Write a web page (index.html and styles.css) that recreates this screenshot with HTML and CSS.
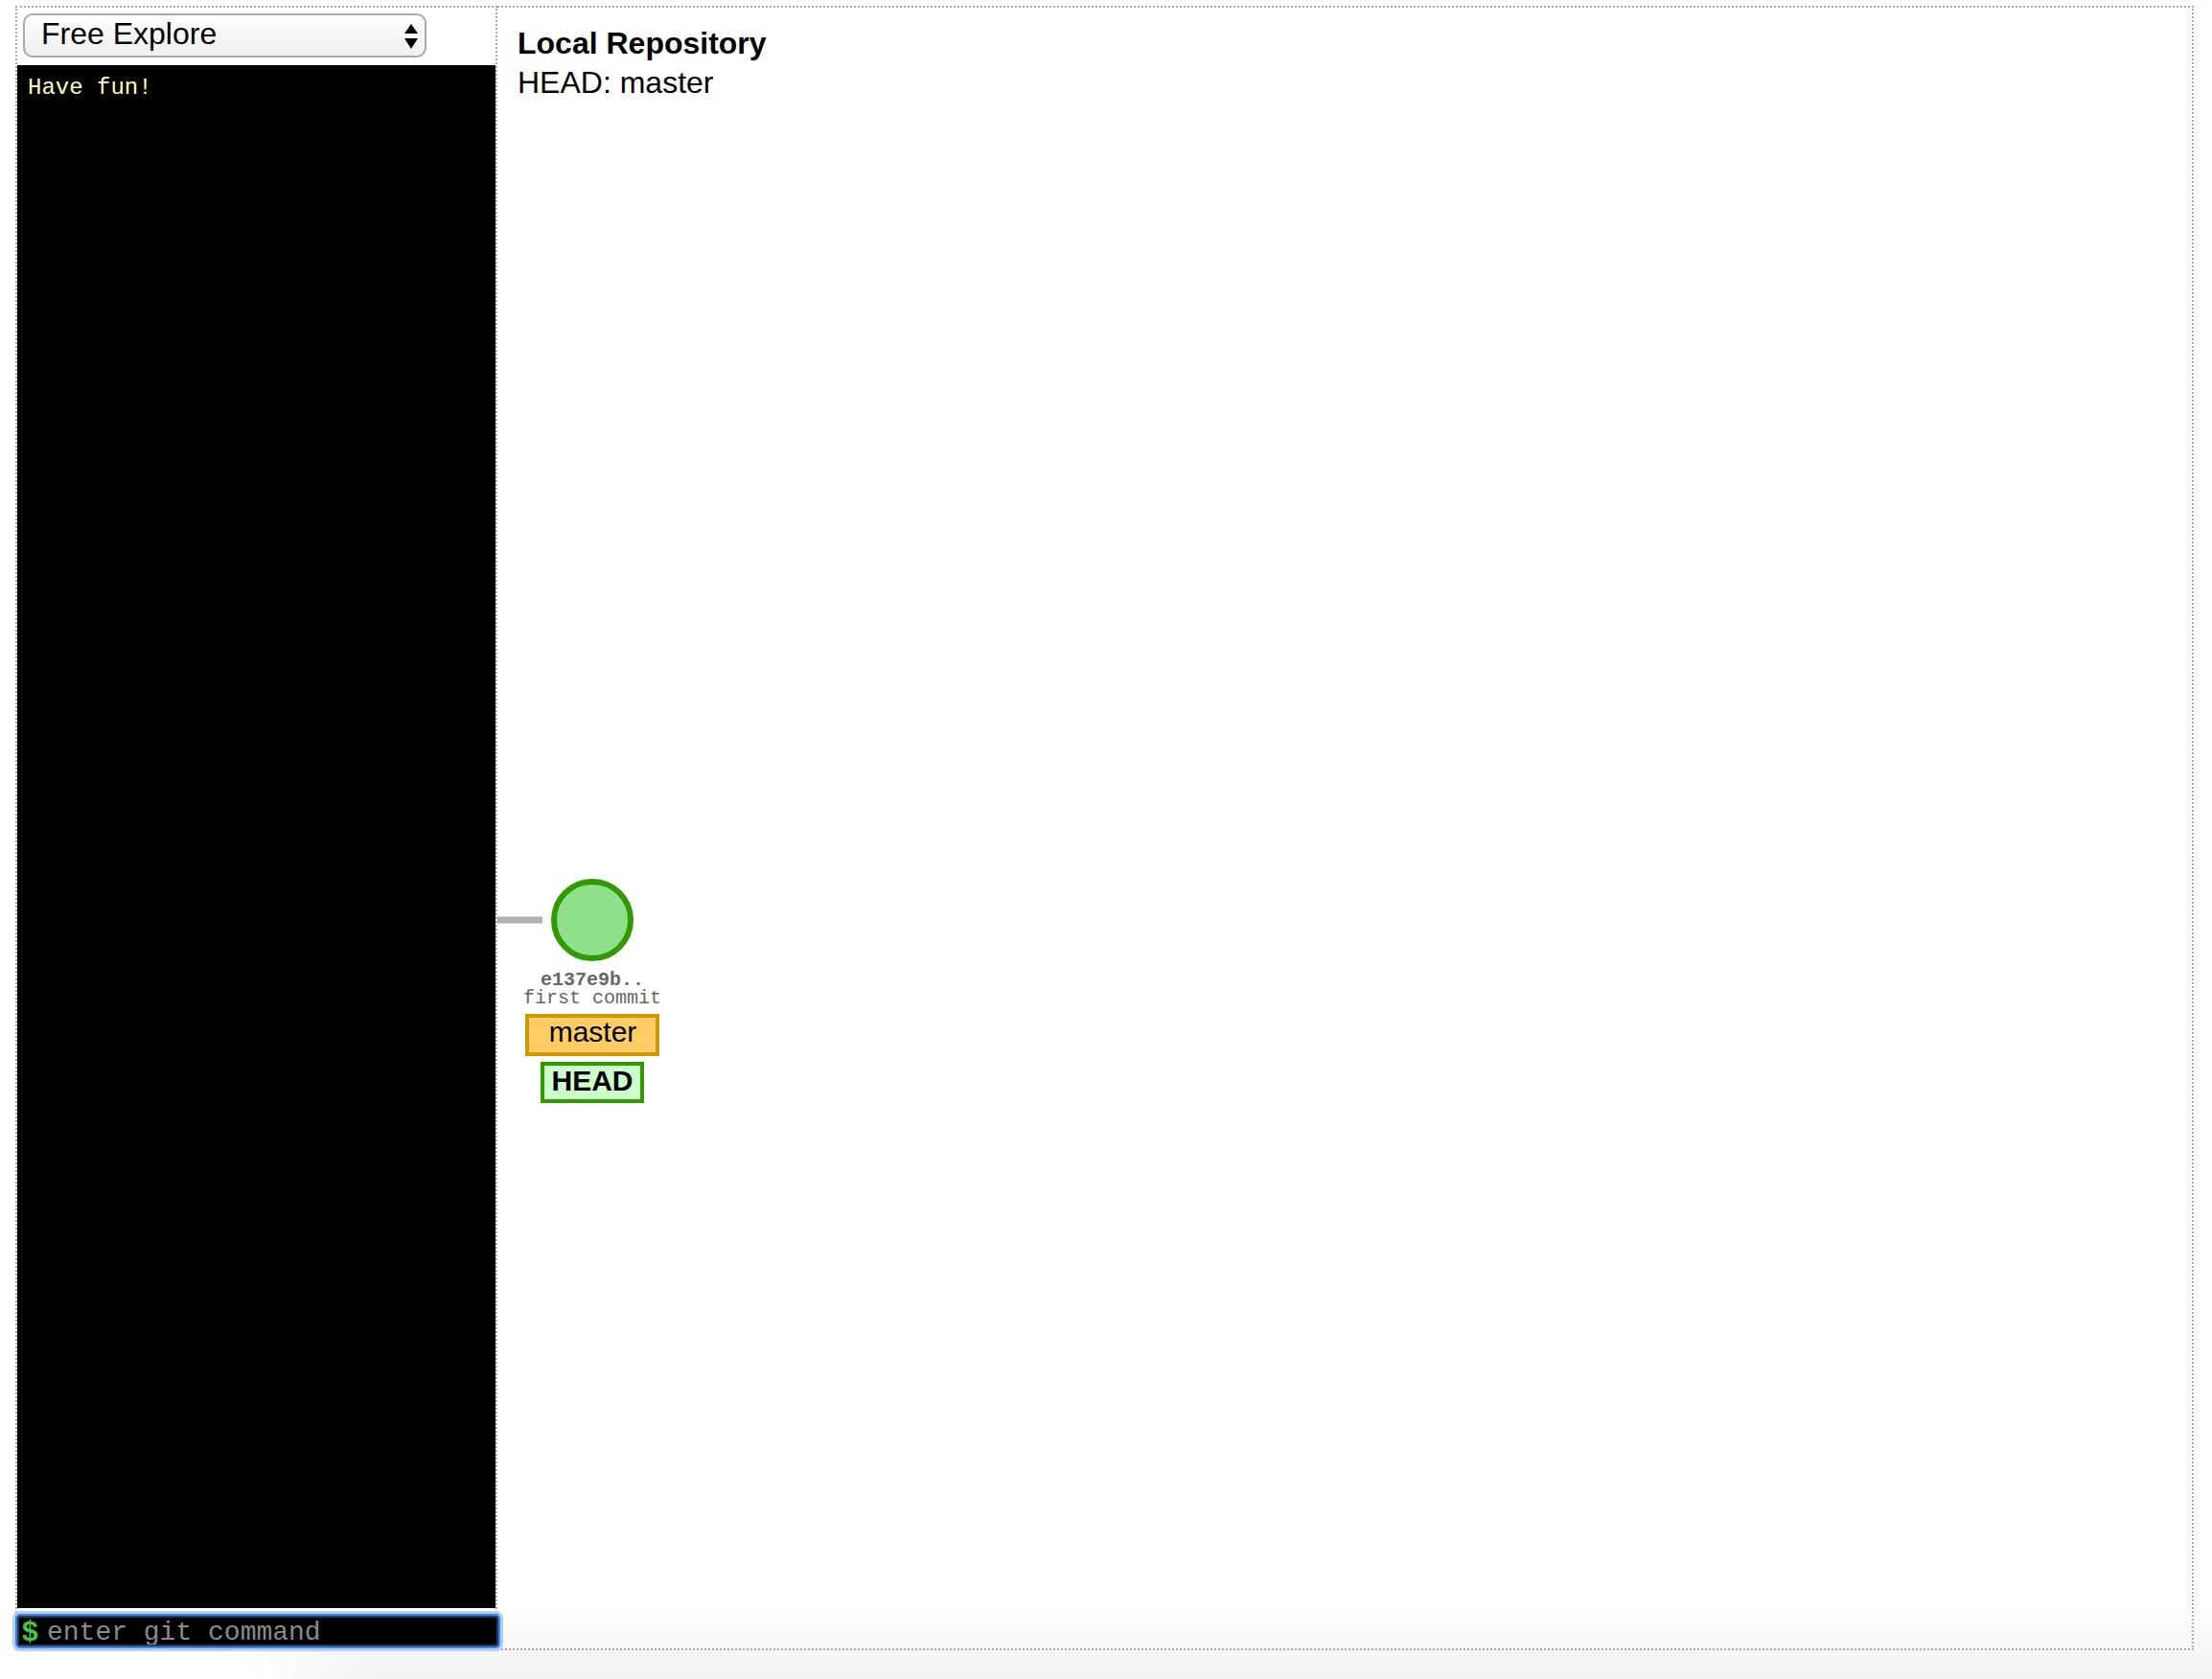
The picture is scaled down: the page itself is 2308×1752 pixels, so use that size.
FILE: index.html
```html
<!DOCTYPE html>
<html lang="en">
<head>
<meta charset="utf-8">
<title>Explain Git - Free Explore</title>
<link rel="stylesheet" href="styles.css">
</head>
<body>
<div class="app">
  <div class="control-box">
    <div class="select" role="combobox" aria-label="Choose example">
      <span class="select-label">Free Explore</span>
      <svg class="select-arrows" width="14" height="28" viewBox="0 0 14 28" aria-hidden="true">
        <polygon points="7,0 14,10 0,10" fill="#000"/>
        <polygon points="0,15 14,15 7,26" fill="#000"/>
      </svg>
    </div>
    <div class="log">
      <div class="info">Have fun!</div>
    </div>
    <div class="prompt">
      <span class="dollar">$</span>
      <input class="cmd" type="text" placeholder="enter git command">
    </div>
  </div>
  <div class="svg-container">
    <div class="repo-title">Local Repository</div>
    <div class="head-info">HEAD: master</div>
    <svg class="graph" width="1768" height="1712" aria-label="commit graph">
      <line class="history-line" x1="0" y1="952" x2="47" y2="952"/>
      <circle class="commit" cx="99" cy="952" r="40"/>
      <text class="commit-id" x="99" y="1020">e137e9b..</text>
      <text class="message" x="99" y="1039">first commit</text>
      <rect class="branch-tag" x="31" y="1052" width="136" height="40"/>
      <text class="branch-label" x="99.5" y="1079">master</text>
      <rect class="head-tag" x="47" y="1102" width="104" height="39"/>
      <text class="head-label" x="99" y="1130">HEAD</text>
    </svg>
  </div>
</div>
</body>
</html>
```

FILE: styles.css
```css
* { box-sizing: border-box; }

html, body {
  margin: 0;
  padding: 0;
}

html {
  overflow: hidden;
}

body {
  height: 1752px;
  font-family: "Liberation Sans", Arial, sans-serif;
  color: #000;
  background:
    radial-gradient(ellipse 400px 90px at 0 100%, #ffffff 65%, rgba(255,255,255,0) 100%),
    linear-gradient(180deg, #ffffff 0, #ffffff 1676px, #fafafa 1704px, #f1f1f1 1752px);
  background-repeat: no-repeat;
}

.app {
  display: flex;
  align-items: flex-start;
  padding: 6px 0 0 16px;
}

/* left control box */
.control-box {
  width: 503px;
  height: 1716px;
  border: 2px dotted #aaa;
  display: flex;
  flex-direction: column;
}

.select {
  margin: 6px 0 0 6px;
  width: 421px;
  height: 46px;
  border: 2px solid #a9a9a9;
  border-radius: 10px;
  background: linear-gradient(180deg, #ffffff 0%, #f6f6f6 50%, #efefef 100%);
  display: flex;
  align-items: flex-start;
  justify-content: space-between;
  padding: 0 7px 4px 17px;
}

.select-label {
  font-size: 32px;
  line-height: 38px;
  color: #000;
}

.select-arrows {
  margin-top: 9px;
  flex: none;
}

.log {
  margin-top: 8px;
  height: 1610px;
  background: #000;
  padding: 10px 11px;
  font-family: "Liberation Mono", "Courier New", monospace;
  font-size: 24px;
}

.info {
  color: #ffffc4;
}

.prompt {
  margin-top: 8px;
  width: 502px;
  height: 32px;
  border: 2px solid #1c3a63;
  border-radius: 3px;
  background: #000;
  box-shadow: 0 0 0 2px #3f82d6, 0 0 0 5px #aecff6;
  display: flex;
  align-items: center;
  position: relative;
  z-index: 1;
}

.dollar {
  width: 29px;
  padding-left: 3px;
  font-family: "Liberation Sans", Arial, sans-serif;
  font-weight: bold;
  font-size: 30px;
  line-height: 28px;
  color: #45c545;
}

.cmd {
  flex: 1;
  min-width: 0;
  height: 28px;
  border: 0;
  outline: none;
  background: transparent;
  padding: 2px 0 0 0;
  font-family: "Liberation Mono", "Courier New", monospace;
  font-size: 28px;
  line-height: 26px;
  color: #fff;
}

.cmd::placeholder {
  color: #8a8a8a;
}

/* right svg area */
.svg-container {
  position: relative;
  width: 1770px;
  height: 1716px;
  border: 2px dotted #aaa;
  border-left: none;
  padding: 17px 0 0 21px;
  overflow: hidden;
}

.repo-title {
  font-size: 32px;
  font-weight: bold;
  line-height: 41px;
}

.head-info {
  font-size: 32px;
  line-height: 41px;
}

.graph {
  position: absolute;
  left: 0;
  top: 0;
}

.history-line {
  stroke: #b0b0b0;
  stroke-width: 7;
}

.commit {
  fill: #8ee08b;
  stroke: #339900;
  stroke-width: 6;
}

.commit-id {
  font-family: "Liberation Mono", "Courier New", monospace;
  font-weight: bold;
  font-size: 20px;
  fill: #666;
  text-anchor: middle;
}

.message {
  font-family: "Liberation Mono", "Courier New", monospace;
  font-size: 20px;
  fill: #666;
  text-anchor: middle;
}

.branch-tag {
  fill: #ffcc66;
  stroke: #cc9900;
  stroke-width: 4;
}

.branch-label {
  font-family: "Liberation Sans", Arial, sans-serif;
  font-size: 30px;
  fill: #000;
  text-anchor: middle;
}

.head-tag {
  fill: #ccffcc;
  stroke: #339900;
  stroke-width: 4;
}

.head-label {
  font-family: "Liberation Sans", Arial, sans-serif;
  font-weight: bold;
  font-size: 30px;
  fill: #000;
  text-anchor: middle;
}
```
